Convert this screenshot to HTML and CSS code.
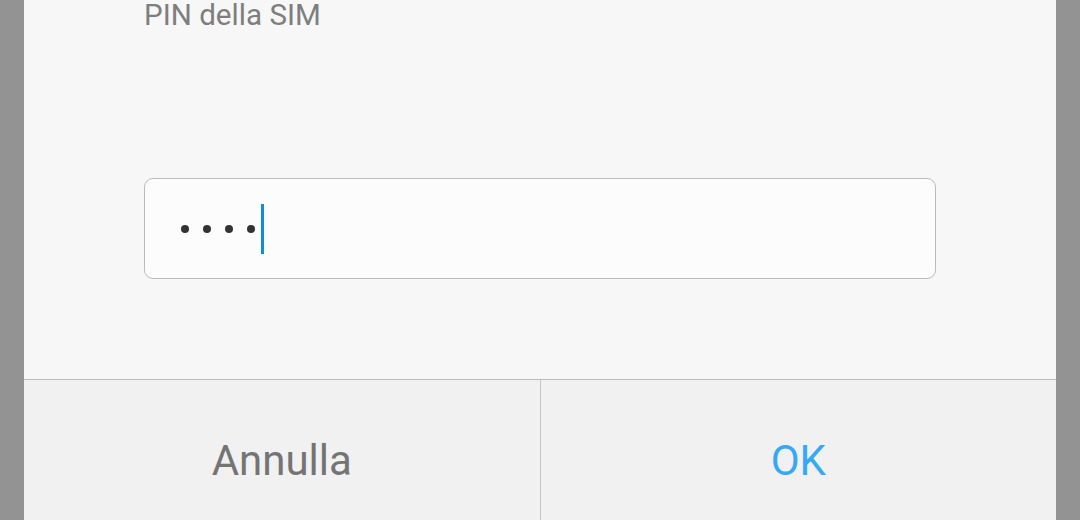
FILE: index.html
```html
<!DOCTYPE html>
<html>
<head>
<meta charset="utf-8">
<link rel="stylesheet" href="styles.css">
</head>
<body>
<div class="dialog">
  <div class="content">
    <div class="title">PIN della SIM</div>
    <div class="field">
      <span class="dot"></span><span class="dot"></span><span class="dot"></span><span class="dot"></span><span class="cursor"></span>
    </div>
  </div>
  <div class="buttons">
    <div class="btn cancel">Annulla</div>
    <div class="btn ok">OK</div>
  </div>
</div>
</body>
</html>
```
FILE: styles.css
```css
html, body {
  margin: 0;
  padding: 0;
  height: 100%;
  background: #939393;
  overflow: hidden;
}
body {
  font-family: Roboto, "Noto Sans", sans-serif;
}
.dialog {
  margin: 0 24px;
  width: 1032px;
  height: 520px;
  background: #f7f7f7;
  display: flex;
  flex-direction: column;
}
.content {
  padding: 0 120px 100px 120px;
  border-bottom: 1px solid #bdbdbd;
}
.title {
  font-size: 29.6px;
  line-height: 30px;
  color: #7e7e7e;
  padding-left: 0;
}
.field {
  margin-top: 148px;
  height: 99px;
  border: 1px solid #bbbbbb;
  border-radius: 9px;
  background: #fcfcfc;
  display: flex;
  align-items: center;
  padding-left: 36px;
}
.dot {
  width: 8px;
  height: 8px;
  border-radius: 50%;
  background: #333333;
  margin-right: 14px;
}
.dot:nth-child(4) {
  margin-right: 6px;
}
.cursor {
  width: 3px;
  height: 50px;
  background: #0a8fdc;
}
.buttons {
  flex: 1;
  display: flex;
  background: #f1f1f1;
}
.btn {
  flex: 1;
  display: flex;
  align-items: center;
  justify-content: center;
  font-size: 42px;
  height: 160px;
}
.cancel {
  color: #747474;
  border-right: 1px solid #c4c4c4;
}
.ok {
  color: #35a9f5;
}
```
